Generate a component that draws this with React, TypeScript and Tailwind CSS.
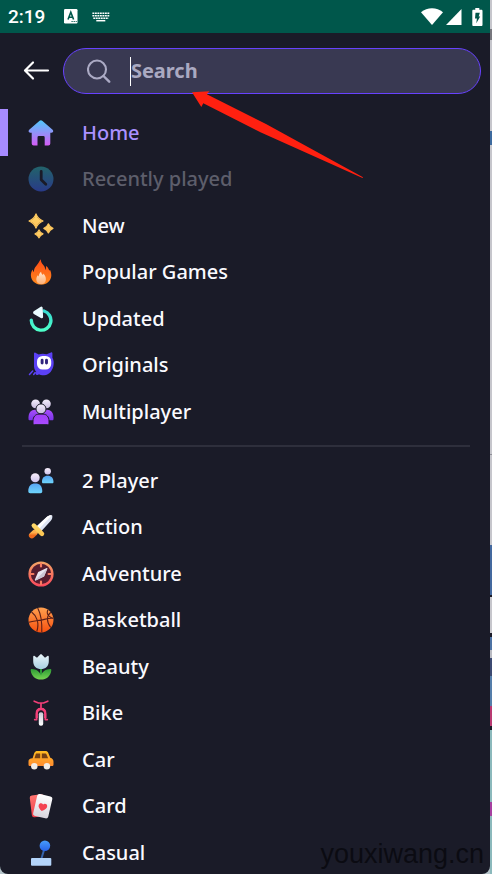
import React from 'react';

interface MenuItem {
  name: string;
  href: string;
  icon: React.ReactNode;
  active?: boolean;
  disabled?: boolean;
}

interface IconProps {
  children: React.ReactNode;
}

const Icon = ({ children }: IconProps) => (
  <svg viewBox="0 0 26 26" className="size-[26px] shrink-0" fill="none" aria-hidden="true">
    {children}
  </svg>
);

interface GradientProps {
  id: string;
  from: string;
  to: string;
}

// Vertical two-stop gradient shared by most of the icons
const Gradient = ({ id, from, to }: GradientProps) => (
  <linearGradient id={id} x1="0" y1="0" x2="0" y2="1">
    <stop stopColor={from} />
    <stop offset="1" stopColor={to} />
  </linearGradient>
);

const HomeIcon = () => (
  <Icon>
    <Gradient id="home" from="#4fc8fb" to="#d65cf6" />
    <path
      fill="url(#home)"
      d="M11.6.7a2 2 0 0 1 2.6 0l10.4 9.1c1.2 1.1.5 3-1.1 3h-1.2V23.500a2 2 0 0 1-2 2h-3.600v-8.100a1.300 1.300 0 0 0-1.300-1.300h-4.600a1.300 1.300 0 0 0-1.300 1.300v8.100H5.700a2 2 0 0 1-2-2V12.800H2.400c-1.700 0-2.400-1.900-1.200-3z"
    />
  </Icon>
);

const ClockIcon = () => (
  <Icon>
    <Gradient id="clock" from="#22636a" to="#293a88" />
    <circle cx="13" cy="13" r="12.5" fill="url(#clock)" />
    <path d="M13.200 5.500v8.200l4.600 4.500" stroke="#1a1b28" strokeWidth="2.800" strokeLinecap="round" strokeLinejoin="round" />
  </Icon>
);

const SparklesIcon = () => (
  <Icon>
    <Gradient id="sparkles" from="#ffd76b" to="#ffc158" />
    <g fill="url(#sparkles)" stroke="#fdc65d" strokeWidth="1.2" strokeLinejoin="round">
      <path d="M8 .9c1.500 4.100 2.900 5.500 7 7.100-4.100 1.600-5.500 3-7 7.100C6.500 11 5.100 9.600 1 8c4.100-1.600 5.500-3 7-7.100z" />
      <path d="M20.400 10.800c1 2.700 1.900 3.600 4.600 4.600-2.700 1-3.600 1.900-4.600 4.600-1-2.700-1.900-3.600-4.600-4.600 2.700-1 3.600-1.900 4.600-4.600z" />
      <path d="M11 16.900c.9 2.300 1.700 3.100 4 4-2.300.9-3.100 1.700-4 4-.9-2.300-1.700-3.100-4-4 2.300-.9 3.100-1.700 4-4z" />
    </g>
  </Icon>
);

const FlameIcon = () => (
  <Icon>
    <Gradient id="flame" from="#ff4a17" to="#ff8a1c" />
    <Gradient id="flame-core" from="#ffe6cf" to="#ffae72" />
    <path
      fill="url(#flame)"
      d="M13 .3c-.4 2.300.6 4 2.500 6 1.500 1.600 1.700 3.300 1.600 4.700.8-.8 1.100-2.300.9-4 1.700 1 2.400 2.300 2.900 3.800.3.900.8 1 1.200.3.800 1.800 1.300 3.600 1.200 5.600-.3 5-4.500 8.900-10.200 8.900S3.200 21.600 2.900 16.700c-.1-2 .4-4.600 2-6.200-.1 1.300.2 2 .9 2.500.1-2.200.7-4.400 2.600-6.300C10.500 4.500 11 2.400 13 .3z"
    />
    <path
      fill="url(#flame-core)"
      d="M13.100 12.800c.1 1.900 1 2.600 1.900 3.300.2-.6.3-1.100.2-1.700 1.800 1.600 2.800 3.400 2.700 6-.1 3-2 4.900-4.900 4.900s-4.700-2-4.700-4.700c0-2 .7-3.200 1.600-4.300.2.7.4 1 .8 1.300.1-1.900.8-3.500 2.400-4.800z"
    />
  </Icon>
);

const RefreshIcon = () => (
  <Icon>
    <Gradient id="refresh" from="#36d9d0" to="#4dffc9" />
    <path d="M3.300 14.300A9.800 9.800 0 1 0 16 5" stroke="url(#refresh)" strokeWidth="3.400" strokeLinecap="round" />
    <path d="M6.600 6.600 13.200 2.200l.4 8.600z" fill="#e8fbff" stroke="#e8fbff" strokeWidth="3" strokeLinejoin="round" />
  </Icon>
);

const MascotIcon = () => (
  <Icon>
    <path
      fill="#5b41f5"
      d="M6 1.500c0-.8.7-1.100 1.400-.8l3.300 1.700c2.700-.8 5.400-.8 7.900-.1L23 .400c.7-.4 1.400 0 1.400.8v4.500c1.200 1.900 1.500 4.300 1.200 7-.6 5.300-4.300 10.200-9.300 10.500-2 .2-4-.2-5.300-1-.8.900-2 1.100-3 .3-.8-.8-.7-1.800.3-2.600C6.600 18.200 5.800 15.500 6 12.500z"
    />
    <rect x="9" y="4" width="14.200" height="13.500" rx="5.500" fill="#fff" />
    <path d="M14.100 8.300v2.800M18.500 8.300v2.800" stroke="#30257e" strokeWidth="2.900" strokeLinecap="round" />
    <path d="m1.500 22.500 3.200-3.500M5.700 22.500l1.500-2" stroke="#5b41f5" strokeWidth="1.500" strokeLinecap="round" />
  </Icon>
);

const GroupIcon = () => (
  <Icon>
    <Gradient id="group-head" from="#f4eefc" to="#c9bce0" />
    <Gradient id="group-body" from="#a94dfa" to="#7a35e8" />
    <Gradient id="group-front" from="#a23ef7" to="#a94cff" />
    <circle cx="7.600" cy="4.800" r="4.400" fill="url(#group-head)" />
    <circle cx="18.400" cy="4.800" r="4.400" fill="url(#group-head)" />
    <path fill="url(#group-body)" d="M.500 18.200c0-4.500 2.600-7.500 6.500-7.500h12c3.900 0 6.500 3 6.500 7.500V20c0 .8-.5 1.300-1.300 1.300H1.800c-.8 0-1.300-.5-1.300-1.300z" />
    <circle cx="13" cy="9.900" r="5" fill="url(#group-head)" stroke="#1a1b28" strokeWidth="1" />
    <path
      fill="url(#group-front)"
      stroke="#1a1b28"
      strokeWidth="1"
      d="M5 22c0-4.300 2.600-6.900 6-6.900h4c3.400 0 6 2.600 6 6.900v2.200c0 .9-.6 1.500-1.500 1.500h-13c-.9 0-1.500-.6-1.500-1.500z"
    />
  </Icon>
);

const TwoPlayerIcon = () => (
  <Icon>
    <Gradient id="pair-head" from="#f7eefa" to="#cfc4ee" />
    <Gradient id="pair-body" from="#58a4f5" to="#6ed5fb" />
    <circle cx="19.700" cy="3.300" r="3.200" fill="url(#pair-head)" />
    <path fill="url(#pair-body)" d="M14 14c0-4.200 2-6.300 5.700-6.300s5.800 2.100 5.800 6.300c0 .8-.5 1.300-1.300 1.300h-8.900c-.8 0-1.300-.5-1.300-1.300z" />
    <circle cx="7.200" cy="9.700" r="4.500" fill="url(#pair-head)" />
    <path fill="url(#pair-body)" d="M.300 23.300c0-5.300 2.400-7.900 7-7.900s7 2.600 7 7.900c0 1.200-.7 1.900-1.900 1.900H2.200c-1.200 0-1.900-.7-1.900-1.900z" />
  </Icon>
);

const SwordIcon = () => (
  <Icon>
    <Gradient id="grip" from="#ffb04b" to="#ef6a1c" />
    <Gradient id="guard" from="#ffd867" to="#fbc653" />
    <path fill="#dfe5f4" d="M8.500 12.500 18.700 3c1.700-1.500 3.600-2 5.100-1.700.3 0 .5.200.5.500.3 1.700-.2 3.700-1.700 5.300l-9.600 10.300z" />
    <path fill="#fff" d="M8.500 12.500 18.700 3c1.700-1.500 3.600-2 5.100-1.700L11 15z" />
    <path d="m6.800 18.600-2.900 2.800" stroke="url(#grip)" strokeWidth="6" strokeLinecap="round" />
    <path d="m5.800 11.600 8.200 8.200" stroke="url(#guard)" strokeWidth="4.500" strokeLinecap="round" />
  </Icon>
);

const CompassIcon = () => (
  <Icon>
    <Gradient id="compass" from="#f4a265" to="#fb4c5c" />
    <circle cx="13" cy="13" r="11.400" fill="#551c2f" stroke="url(#compass)" strokeWidth="2.400" />
    <path d="M13 2.800v2.600M13 20.600v2.600M2.800 13h2.600M20.600 13h2.600" stroke="#f77b61" strokeWidth="2.200" strokeLinecap="round" />
    <path fill="#e9e5f0" d="M18.700 7c.5 0 .8.400.6.900l-3.300 7.600-8.300 3.900c-.6.200-1-.3-.8-.8l3.300-7.600z" />
    <path fill="#cbc5d4" d="M19.300 7.400 16 15.500l-8.300 3.900c-.3.100-.5.100-.7-.1z" />
  </Icon>
);

const BasketballIcon = () => (
  <Icon>
    <Gradient id="ball" from="#ffa04f" to="#f7500f" />
    <circle cx="13" cy="13" r="12.500" fill="url(#ball)" />
    <g stroke="#5c1f18" strokeWidth="1.100">
      <path d="M.8 15.300c4.300-1.500 8-1.400 12.200-2.200 4.600-.9 8-2.200 12.300-1.700M9.700 1c3.600 6.700 4.400 15.500 4.100 24.300M3.600 5c5 3.700 8 11 5.200 19.500M22.800 5.300c-4.200 3.300-4.700 9.600 0 15.200M20 2.800c-1.100 2-1 4.200.800 6.100 1.100 1.100 3 2.200 4.400 2.500" />
    </g>
  </Icon>
);

const TulipIcon = () => (
  <Icon>
    <Gradient id="petals" from="#eaf5fa" to="#a7cfe0" />
    <Gradient id="leaves" from="#2f9c36" to="#75d451" />
    <path d="M13 13v11" stroke="#2c9a38" strokeWidth="2" />
    <path
      fill="url(#petals)"
      d="M5.200 2.700c0-.9.700-1.300 1.400-.8l2.400 1.900 3-3c.6-.6 1.400-.6 2 0l3 3 2.400-1.900c.7-.5 1.400-.1 1.400.8v4.500c0 5-3.300 7.800-7.800 7.800s-7.800-2.800-7.800-7.800z"
    />
    <path
      fill="url(#leaves)"
      d="M3.800 15.100c4.500.1 7.800 2.500 9.200 6.500 1.400-4 4.700-6.400 9.200-6.500.8 0 1.200.500 1.100 1.300-.7 5.600-4.800 9.100-10.300 9.100S3.400 22 2.700 16.400c-.1-.8.300-1.300 1.100-1.300z"
    />
  </Icon>
);

const BikeIcon = () => (
  <Icon>
    <Gradient id="tyre" from="#c9c7d4" to="#ffffff" />
    <g stroke="#f23f78" strokeWidth="1.700" strokeLinecap="round" strokeLinejoin="round">
      <path d="M6.200 1.200 10.500 3h5l4.300-1.800M13 3.200v5.500" />
      <path d="M6.700 19.600h2v-5.800c0-2.900 1.700-4.900 4.300-4.900s4.300 2 4.300 4.900v5.800h2" />
    </g>
    <path d="M8.700 18v-4.300c0-2.800 1.600-4.700 4.300-4.700s4.300 1.900 4.300 4.700V18" stroke="#f23f78" strokeWidth="2.300" />
    <rect x="10.800" y="12.200" width="4.400" height="13.500" rx="2" fill="url(#tyre)" />
  </Icon>
);

const CarIcon = () => (
  <Icon>
    <Gradient id="car" from="#ffbd22" to="#ff8c30" />
    <path
      fill="url(#car)"
      d="M4.600 11.300 6.300 6.100C6.900 4.600 8 4 9.400 4h7.800c1.500 0 2.500.6 3.100 2l2 4.700c2 .5 3.200 1.900 3.200 4v2.700c0 1-.6 1.600-1.600 1.600H2.100c-1 0-1.600-.6-1.600-1.600v-3c0-2 1.300-2.900 4.100-3.100z"
    />
    <path fill="#744013" d="M8.400 6.500h3.800v4.700H6.500l1.200-4c.1-.5.300-.7.700-.7zM13.800 6.500h3.600c.5 0 .8.200 1 .7l1.700 4h-6.300z" />
    <circle cx="6.300" cy="19.200" r="3.200" fill="#f0ece7" />
    <circle cx="18.900" cy="19.200" r="3.200" fill="#f0ece7" />
  </Icon>
);

const CardsIcon = () => (
  <Icon>
    <Gradient id="card-back" from="#ff7470" to="#ee3c48" />
    <Gradient id="card-front" from="#ffffff" to="#d8d5dd" />
    <rect x="2.800" y="1.800" width="14" height="22" rx="2.300" fill="url(#card-back)" transform="rotate(-7 10 13)" />
    <rect x="7" y="1.900" width="15.500" height="22.500" rx="2.500" fill="url(#card-front)" transform="rotate(13 14.700 13)" />
    <path
      fill="#f44351"
      d="M13.700 17.900c-2.400-2.200-3.600-4.200-3-6 .6-1.900 3.100-2.400 4.400-.5 1.600-1.300 4-.5 4.100 1.500.1 1.900-1.800 3.600-5.500 5z"
    />
  </Icon>
);

const JoystickIcon = () => (
  <Icon>
    <Gradient id="stick" from="#479dfb" to="#2863e8" />
    <path d="M16.600 8 13 20" stroke="#3464ad" strokeWidth="2" />
    <circle cx="16.900" cy="5.700" r="5.300" fill="url(#stick)" />
    <rect x="3" y="18" width="20.300" height="7.700" rx="1" fill="#b3d4fa" />
  </Icon>
);

const mainItems: MenuItem[] = [
  { name: 'Home', href: '#home', icon: <HomeIcon />, active: true },
  { name: 'Recently played', href: '#recent', icon: <ClockIcon />, disabled: true },
  { name: 'New', href: '#new', icon: <SparklesIcon /> },
  { name: 'Popular Games', href: '#popular', icon: <FlameIcon /> },
  { name: 'Updated', href: '#updated', icon: <RefreshIcon /> },
  { name: 'Originals', href: '#originals', icon: <MascotIcon /> },
  { name: 'Multiplayer', href: '#multiplayer', icon: <GroupIcon /> },
];

const categoryItems: MenuItem[] = [
  { name: '2 Player', href: '#2-player', icon: <TwoPlayerIcon /> },
  { name: 'Action', href: '#action', icon: <SwordIcon /> },
  { name: 'Adventure', href: '#adventure', icon: <CompassIcon /> },
  { name: 'Basketball', href: '#basketball', icon: <BasketballIcon /> },
  { name: 'Beauty', href: '#beauty', icon: <TulipIcon /> },
  { name: 'Bike', href: '#bike', icon: <BikeIcon /> },
  { name: 'Car', href: '#car', icon: <CarIcon /> },
  { name: 'Card', href: '#card', icon: <CardsIcon /> },
  { name: 'Casual', href: '#casual', icon: <JoystickIcon /> },
];

// Sliver of the page left visible beside the drawer
const pageSlices = [
  { className: 'bg-[#c6c6cc]', size: 29 },
  { className: 'bg-[#77777e]', size: 11 },
  { className: 'bg-[#c6c6cc]', size: 91 },
  { className: 'bg-[#3d6a9e]', size: 14 },
  { className: 'bg-[#c6c6cc]', size: 309 },
  { className: 'bg-[#8f8f98]', size: 1 },
  { className: 'bg-[#c6c6cc]', size: 90 },
  { className: 'bg-[#44699f]', size: 50 },
  { className: 'bg-[#1a1b28]', size: 2 },
  { className: 'bg-[#c6c6cc]', size: 36 },
  { className: 'bg-[#1a1b28]', size: 4 },
  { className: 'bg-[#4d73a4]', size: 13 },
  { className: 'bg-[#b9bac2]', size: 8 },
  { className: 'bg-[#3c4a72]', size: 18 },
  { className: 'bg-[#557eaa]', size: 30 },
  { className: 'bg-[#b83a72]', size: 20 },
  { className: 'bg-[#1a1b28]', size: 4 },
  { className: 'bg-[#8bb9bc]', size: 72 },
  { className: 'bg-[#a540a0]', size: 14 },
  { className: 'bg-[#8bb9bc]', size: 58 },
];

const StatusBar = () => (
  <div className="flex h-[33px] shrink-0 items-center bg-[#00574b] pr-[7px] pl-2 text-white">
    <span className="font-[Roboto,sans-serif] text-[19px] leading-6 font-medium">2:19</span>
    <svg viewBox="0 0 14 15" className="ml-[19px] h-[15px] w-[14px]" aria-hidden="true">
      <rect width="13.500" height="14.500" rx="1.200" fill="#fff" />
      <path d="M4 10.500 6.800 3.200 9.600 10.500M5 8.300h3.600" fill="none" stroke="#00574b" strokeWidth="1.600" />
      <path d="M7.500 12.500h1.200m.9 0h1.200m.9 0h1" stroke="#00574b" strokeWidth="1" />
    </svg>
    <svg viewBox="0 0 18 10" className="ml-[14px] h-[10px] w-[18px]" aria-hidden="true">
      <g stroke="#fff" strokeWidth="1.600" strokeDasharray="1.900 .6">
        <path d="M.4 1.200h17M.4 3.700h17M1.300 6.200h15.200" />
      </g>
      <path d="M4.300 8.700h9" stroke="#fff" strokeWidth="1.500" />
    </svg>
    <div className="ml-auto flex items-center">
      <svg viewBox="0 0 22 17" className="h-[17px] w-[22px]" aria-hidden="true">
        <path fill="#fff" d="M0 4.200C6.200-1 15.800-1 22 4.200L11 17z" />
      </svg>
      <svg viewBox="0 0 16 16" className="ml-[3px] size-4" aria-hidden="true">
        <path fill="#fff" d="M15.500 0v16H0z" />
      </svg>
      <svg viewBox="0 0 11 18" className="ml-2.5 h-[18px] w-[11px]" aria-hidden="true">
        <path fill="#fff" d="M3.300 0h4v1.700h2c.8 0 1.200.4 1.200 1.200v13.900c0 .8-.4 1.200-1.200 1.200H1.500c-.8 0-1.200-.4-1.200-1.200V2.900c0-.8.4-1.200 1.200-1.200h1.800z" />
        <path fill="#00574b" d="M3.500 4.800h4.300L6.700 8.500h1.500L4.300 15.300l.600-4.700H3z" />
      </svg>
    </div>
  </div>
);

const SearchHeader = () => (
  <header className="flex shrink-0 items-center pt-[15px] pr-[9px] pl-[23px]">
    <button type="button" aria-label="Back" className="flex h-[46px] w-10 items-center">
      <svg viewBox="0 0 28 22" className="h-[22px] w-7" fill="none" aria-hidden="true">
        <path
          d="M25 10.500H2.500M10 2.500l-8 8 8 8"
          stroke="#fff"
          strokeWidth="2.200"
          strokeLinecap="round"
          strokeLinejoin="round"
        />
      </svg>
    </button>
    <label className="flex h-[46px] flex-1 items-center rounded-full border border-[#6842ff] bg-[#393952] pl-[23px]">
      <svg viewBox="0 0 24 24" className="size-6 shrink-0" fill="none" aria-hidden="true">
        <circle cx="10" cy="10.500" r="9" stroke="#abaac4" strokeWidth="2.100" />
        <path d="m16.500 17 5.700 5.700" stroke="#abaac4" strokeWidth="2.400" strokeLinecap="round" />
      </svg>
      <span className="ml-[19px] h-[29px] w-px bg-white" />
      <input
        type="text"
        aria-label="Search"
        placeholder="Search"
        className="h-7 w-full min-w-0 bg-transparent font-[Noto_Sans,sans-serif] text-xl leading-7 font-bold text-white outline-none placeholder:text-[#aaa9c1]"
      />
    </label>
  </header>
);

const MenuRow = ({ item }: { item: MenuItem }) => (
  <li className="h-[47px] even:h-[46px]">
    <a
      href={item.href}
      aria-current={item.active ? 'page' : undefined}
      aria-disabled={item.disabled}
      className={`flex h-full items-center gap-7 border-l-8 pl-5 text-xl leading-7 font-medium ${
        item.active
          ? 'border-[#a78bff] text-[#aa90ff]'
          : item.disabled
            ? 'border-transparent text-[#5d5e6b]'
            : 'border-transparent text-[#fafaff]'
      }`}
    >
      {item.icon}
      <span>{item.name}</span>
    </a>
  </li>
);

const PointerArrow = () => (
  <svg
    viewBox="0 0 172 88"
    className="pointer-events-none absolute top-[91px] left-48 h-[88px] w-[172px]"
    aria-hidden="true"
  >
    <path fill="#ff2010" d="M0 1.300 17.500.300 14.800 3.200 74 33 171 86.300 170.500 87 69 41.500 11.300 12.200 9.300 16z" />
  </svg>
);

const App = () => {
  return (
    <div className="relative flex h-screen overflow-hidden bg-[#b5c4ca] font-[Noto_Sans,sans-serif]">
      <div className="flex min-w-0 flex-1 flex-col overflow-hidden rounded-b-lg bg-[#1a1b28]">
        <StatusBar />
        <SearchHeader />

        {/* Navigation */}
        <nav className="shrink-0 pt-[15px]">
          <ul>
            {mainItems.map((item) => (
              <MenuRow key={item.name} item={item} />
            ))}
          </ul>
          <hr className="mt-[10px] mr-5 mb-[10px] ml-[22px] border-t-2 border-[#2e2f3c]" />
          <ul>
            {categoryItems.map((item) => (
              <MenuRow key={item.name} item={item} />
            ))}
          </ul>
        </nav>
      </div>

      <div className="flex w-0.5 flex-col" aria-hidden="true">
        {pageSlices.map((slice, index) => (
          <div key={index} className={slice.className} style={{ flexGrow: slice.size }} />
        ))}
      </div>

      <PointerArrow />
      <span className="pointer-events-none absolute right-2 bottom-1 font-[Liberation_Sans,sans-serif] text-[27px] leading-8 text-[#0b0b12]">
        youxiwang.cn
      </span>
    </div>
  );
};

export default App;
